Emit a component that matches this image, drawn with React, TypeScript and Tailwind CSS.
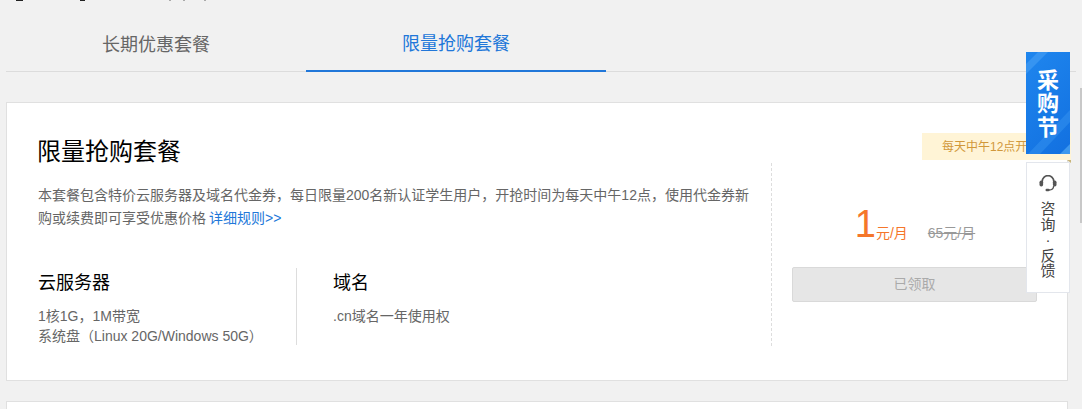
const cjk = { fontFamily: '"Liberation Sans", "Noto Sans CJK SC", sans-serif' };

function HeadsetIcon() {
  return (
    <svg width="18" height="17" viewBox="0 0 18 17" fill="none">
      <path d="M3.2 7.5V6.4a5.8 5.8 0 0 1 11.6 0v1.1" stroke="#555" strokeWidth="1.7" />
      <rect x="0.5" y="5.5" width="3.6" height="6" rx="1.7" fill="#555" />
      <rect x="13.9" y="5.5" width="3.6" height="6" rx="1.7" fill="#555" />
      <path d="M14.6 11c0 2.8-2 4-4.6 4" stroke="#555" strokeWidth="1.3" />
      <rect x="6.5" y="13.8" width="4" height="2.4" rx="1.2" fill="#555" />
    </svg>
  );
}

function PromoStripes() {
  return (
    <svg className="absolute inset-0" width="44" height="102" viewBox="0 0 44 102" fill="none">
      <path d="M0 12 12 0h10L0 22Z" fill="#4aa3f5" fillOpacity="0.55" />
      <path d="M44 58v12L14 102H2Z" fill="#3f9cf2" fillOpacity="0.4" />
      <path d="M44 92v10H34Z" fill="#5cb2f7" fillOpacity="0.6" />
    </svg>
  );
}

export default function App() {
  return (
    <div className="relative h-[409px] w-[1082px] overflow-hidden bg-[#f1f1f1]" style={cjk}>
      {/* bottom edge of the heading scrolled off the top */}
      <div className="absolute left-[16px] top-0 h-px w-[7px] bg-[#222]" />
      <div className="absolute left-[80px] top-0 h-px w-[5px] bg-[#222]" />
      <div className="absolute left-[169px] top-0 h-px w-[2px] bg-[#aaa]" />
      <div className="absolute left-[183px] top-0 h-px w-[2px] bg-[#aaa]" />
      <div className="absolute left-[204px] top-0 h-px w-[2px] bg-[#aaa]" />

      <div className="h-[72px] px-[6px]">
        <div className="flex h-[72px] w-[1070px] border-b border-[#dcdcdc]">
          <button className="h-[72px] w-[300px] pt-[19px] text-[18px] text-[#666]">长期优惠套餐</button>
          <button className="h-[72px] w-[300px] border-b-2 border-[#2177d9] pt-[19px] text-[18px] text-[#2177d9]">
            限量抢购套餐
          </button>
        </div>
      </div>

      <div className="relative mx-[6px] mt-[30px] flex h-[279px] w-[1062px] border border-[#e0e0e0] bg-white">
        <div className="w-[764px] pl-[31px] pt-[33px]">
          <h2 className="-ml-px text-[24px] leading-[32px] font-normal text-black">限量抢购套餐</h2>
          <p className="mt-[16px] w-[715px] text-[14px] leading-[23px] text-[#666]">
            本套餐包含特价云服务器及域名代金券，每日限量200名新认证学生用户，开抢时间为每天中午12点，使用代金券新购或续费即可享受优惠价格
            <a className="ml-[3px] text-[#2177d9]">详细规则&gt;&gt;</a>
          </p>
          <div className="mt-[38px] flex h-[77px]">
            <div className="w-[259px] border-r border-[#ddd]">
              <h3 className="pt-px text-[18px] leading-[28px] font-normal text-black">云服务器</h3>
              <p className="mt-[9px] text-[14px] leading-[20px] text-[#666]">
                1核1G，1M带宽
                <br />
                系统盘（Linux 20G/Windows 50G）
              </p>
            </div>
            <div className="pl-[36px]">
              <h3 className="pt-px text-[18px] leading-[28px] font-normal text-black">域名</h3>
              <p className="mt-[9px] text-[14px] leading-[20px] text-[#666]">.cn域名一年使用权</p>
            </div>
          </div>
        </div>

        <div className="mt-[60px] h-[183px] w-[296px] border-l border-dashed border-[#ddd] px-[20px]">
          <div className="mt-[39px] flex h-[44px] items-end justify-center pr-[9px]">
            <span className="text-[38px] leading-[44px] text-[#f5762a]">1</span>
            <span className="mb-[3px] text-[14px] leading-[20px] text-[#f5762a]">元/月</span>
            <span className="mb-[3px] ml-[20px] text-[14px] leading-[20px] text-[#999] line-through">65元/月</span>
          </div>
          <button className="mt-[21px] h-[35px] w-[245px] rounded-[2px] border border-[#d9d9d9] bg-[#e6e6e6] text-[14px] text-[#aaa]">
            已领取
          </button>
        </div>

        <div className="absolute right-[-4px] top-[30px] flex h-[27px] w-[149px] items-center bg-[#fff4d6] pl-[20px] text-[12px] whitespace-nowrap text-[#d1983a]">
          每天中午12点开抢
        </div>
        <div className="absolute right-[-4px] top-[57px] h-0 w-0 border-r-[4px] border-b-[3px] border-r-[#c9b57a] border-b-transparent" />
      </div>

      <div className="mx-[6px] mt-[20px] h-[40px] w-[1062px] border border-[#e0e0e0] bg-white" />

      <div className="absolute right-0 top-[88px] h-[135px] w-[2px] bg-[#c8c8c8]" />

      <div className="absolute left-[1026px] top-[52px] flex h-[102px] w-[44px] flex-col items-center justify-center bg-[linear-gradient(135deg,#1f86ee,#1270e0)] pt-[2px] text-[22px] leading-[23.5px] font-bold text-white">
        <PromoStripes />
        <span className="relative">采</span>
        <span className="relative">购</span>
        <span className="relative">节</span>
      </div>
      <div className="absolute left-[1026px] top-[162px] flex h-[131px] w-[44px] flex-col items-center border border-[#e3e6ec] bg-white pt-[12px] text-[15px] leading-[15.5px] text-[#444]">
        <HeadsetIcon />
        <span className="mt-[9px]">咨</span>
        <span>询</span>
        <span>·</span>
        <span>反</span>
        <span>馈</span>
      </div>
    </div>
  );
}
